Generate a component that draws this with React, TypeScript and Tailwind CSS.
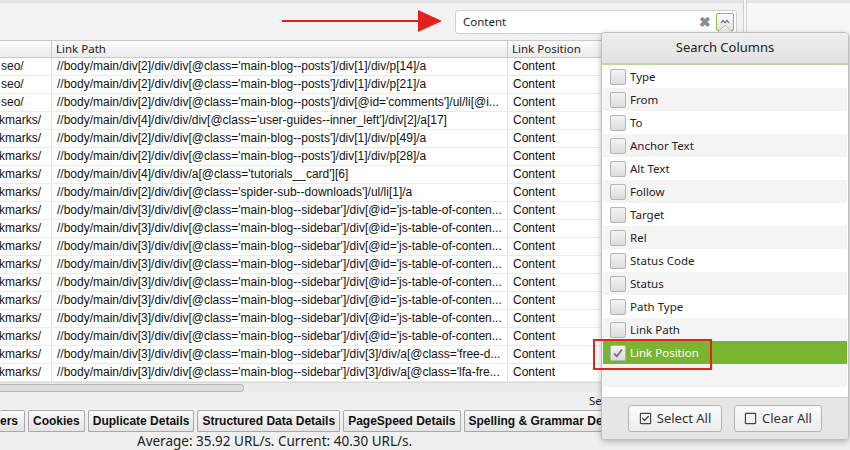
import React from "react";
import { FaRegCheckSquare, FaRegSquare } from "react-icons/fa";

const rows: [string, string][] = [
  ["seo/", "//body/main/div[2]/div/div[@class='main-blog--posts']/div[1]/div/p[14]/a"],
  ["seo/", "//body/main/div[2]/div/div[@class='main-blog--posts']/div[1]/div/p[21]/a"],
  ["seo/", "//body/main/div[2]/div/div[@class='main-blog--posts']/div[@id='comments']/ul/li[@i..."],
  ["kmarks/", "//body/main/div[4]/div/div/div[@class='user-guides--inner_left']/div[2]/a[17]"],
  ["kmarks/", "//body/main/div[2]/div/div[@class='main-blog--posts']/div[1]/div/p[49]/a"],
  ["kmarks/", "//body/main/div[2]/div/div[@class='main-blog--posts']/div[1]/div/p[28]/a"],
  ["kmarks/", "//body/main/div[4]/div/div/a[@class='tutorials__card'][6]"],
  ["kmarks/", "//body/main/div[2]/div/div[@class='spider-sub--downloads']/ul/li[1]/a"],
  ["kmarks/", "//body/main/div[3]/div/div[@class='main-blog--sidebar']/div[@id='js-table-of-conten..."],
  ["kmarks/", "//body/main/div[3]/div/div[@class='main-blog--sidebar']/div[@id='js-table-of-conten..."],
  ["kmarks/", "//body/main/div[3]/div/div[@class='main-blog--sidebar']/div[@id='js-table-of-conten..."],
  ["kmarks/", "//body/main/div[3]/div/div[@class='main-blog--sidebar']/div[@id='js-table-of-conten..."],
  ["kmarks/", "//body/main/div[3]/div/div[@class='main-blog--sidebar']/div[@id='js-table-of-conten..."],
  ["kmarks/", "//body/main/div[3]/div/div[@class='main-blog--sidebar']/div[@id='js-table-of-conten..."],
  ["kmarks/", "//body/main/div[3]/div/div[@class='main-blog--sidebar']/div[@id='js-table-of-conten..."],
  ["kmarks/", "//body/main/div[3]/div/div[@class='main-blog--sidebar']/div[@id='js-table-of-conten..."],
  ["kmarks/", "//body/main/div[3]/div/div[@class='main-blog--sidebar']/div[3]/div/a[@class='free-d..."],
  ["kmarks/", "//body/main/div[3]/div/div[@class='main-blog--sidebar']/div[3]/div/a[@class='lfa-fre..."],
];

const columns = [
  "Type",
  "From",
  "To",
  "Anchor Text",
  "Alt Text",
  "Follow",
  "Target",
  "Rel",
  "Status Code",
  "Status",
  "Path Type",
  "Link Path",
  "Link Position",
];

const tabs = [
  { label: "ers", cls: "pl-0 pr-[6px] border-l-0" },
  { label: "Cookies", cls: "px-[4px]" },
  { label: "Duplicate Details", cls: "px-[4px]" },
  { label: "Structured Data Details", cls: "px-[4px]" },
  { label: "PageSpeed Details", cls: "px-[4px]" },
  { label: "Spelling & Grammar Details", cls: "px-[4px]" },
];

function Checkbox({ checked }: { checked?: boolean }) {
  return (
    <div className="w-[16px] h-[16px] shrink-0 rounded-[2px] border border-[#b4b4b4] bg-gradient-to-b from-[#f4f4f4] to-[#dcdcdc] flex items-center justify-center">
      {checked && (
        <svg width="12" height="12" viewBox="0 0 12 12">
          <path d="M2 6.5 L4.8 9.3 L10 2.5" fill="none" stroke="#7a7a7a" strokeWidth="2" />
        </svg>
      )}
    </div>
  );
}

export default function App() {
  return (
    <div className="relative w-[850px] h-[450px] overflow-hidden bg-[#f0f0f0] flex flex-col font-['Liberation_Sans',Arial,sans-serif] text-[12px] text-[#111]">
      <div className="flex h-[432px]">
        {/* left main */}
        <div className="w-[743px] flex flex-col">
          {/* toolbar */}
          <div className="h-[40px] border-t-[3px] border-[#e4e4e4] bg-[#f2f2f2] flex items-center justify-end pr-[6px]">
            <div className="w-[282px] h-[24px] mt-[1px] bg-white border border-[#cfcfcf] rounded-[3px] flex items-center pl-[7px] pr-[2px]">
              <span className="flex-1 font-['Noto_Sans',sans-serif] text-[11.5px] text-[#222]">Content</span>
              <span className="text-[#8c8c8c] text-[14px] font-bold leading-none mr-[5px]">✖</span>
              <div className="w-[18px] h-[18px] rounded-[2px] border border-[#8cc152] bg-gradient-to-b from-[#fafafa] to-[#e2e2e2] flex items-center justify-center">
                <svg width="10" height="8" viewBox="0 0 10 8">
                  <path d="M1 5 L3 2.5 L5 5" fill="none" stroke="#666" strokeWidth="1.2" />
                  <path d="M5 5 L7 2.5 L9 5" fill="none" stroke="#666" strokeWidth="1.2" />
                </svg>
              </div>
            </div>
          </div>
          {/* table header */}
          <div className="h-[18px] flex border-y border-[#c9c9c9] bg-gradient-to-b from-[#fbfbfb] to-[#ebebeb] font-['Noto_Sans',sans-serif] text-[11.5px] text-[#222]">
            <div className="w-[52px] border-r border-[#c9c9c9]" />
            <div className="w-[456px] border-r border-[#c9c9c9] pl-[4px] leading-[16px]">Link Path</div>
            <div className="flex-1 pl-[4px] leading-[16px]">Link Position</div>
          </div>
          {/* rows */}
          <div className="flex flex-col bg-white">
            {rows.map((r, i) => (
              <div key={i} className="h-[18px] flex border-b border-[#ececec] leading-[17px] whitespace-nowrap">
                <div className={`w-[52px] border-r border-[#e2e2e2] overflow-hidden ${r[0] === "kmarks/" ? "pl-0" : "pl-[1px]"}`}>
                  <span className={r[0] === "kmarks/" ? "ml-[-1px]" : ""}>{r[0]}</span>
                </div>
                <div className="w-[456px] border-r border-[#e2e2e2] pl-[5px] overflow-hidden">{r[1]}</div>
                <div className="flex-1 pl-[5px]">Content</div>
              </div>
            ))}
          </div>
          {/* scrollbar */}
          <div className="h-[10px] bg-[#ececec] border-t border-[#d8d8d8] flex items-center">
            <div className="w-[244px] h-[8px] rounded-r-[4px] bg-[#dedede] border border-[#b8b8b8] border-l-0" />
          </div>
          {/* info row */}
          <div className="h-[18px] bg-[#f0f0f0] flex items-center pl-[589px] font-['Noto_Sans',sans-serif] text-[11.5px] text-[#222] whitespace-nowrap overflow-hidden">
            Selected Cells: 0 Total: 18
          </div>
          {/* tabs */}
          <div className="h-[22px] flex items-stretch gap-[3px] whitespace-nowrap overflow-hidden">
            {tabs.map((t) => (
              <div
                key={t.label}
                className={`border border-[#a9a9a9] rounded-t-[2px] bg-gradient-to-b from-[#fafafa] to-[#e3e3e3] font-bold text-[12px] leading-[20px] text-[#111] ${t.cls}`}
              >
                {t.label}
              </div>
            ))}
          </div>
        </div>
        {/* right panel */}
        <div className="flex-1 border-l-[4px] border-double border-[#d0d0d0] bg-[#f7f7f7] flex flex-col">
          <div className="h-[3px] bg-[#e4e4e4]" />
        </div>
      </div>
      {/* status bar */}
      <div className="h-[18px] flex items-center pl-[137px] font-['Noto_Sans',sans-serif] text-[13.5px] text-[#222]">
        Average: 35.92 URL/s. Current: 40.30 URL/s.
      </div>

      {/* red arrow overlay */}
      <svg className="absolute left-[280px] top-[9px]" width="164" height="26" viewBox="0 0 164 26">
        <line x1="2" y1="12" x2="140" y2="12" stroke="#e5211c" strokeWidth="2" />
        <polygon points="138,1 162,12 138,23" fill="#e5211c" />
      </svg>

      {/* popup pointer */}
      <svg className="absolute left-[716px] top-[25px]" width="18" height="9" viewBox="0 0 18 9">
        <polygon points="0,9 9,0 18,9" fill="#ececec" stroke="#c4c4c4" strokeWidth="1" />
        <rect x="0" y="8" width="18" height="2" fill="#ececec" />
      </svg>

      {/* popup */}
      <div className="absolute left-[601px] top-[32px] w-[248px] h-[408px] rounded-[4px] border border-[#bdbdbd] bg-white shadow-[0_2px_6px_rgba(0,0,0,0.25)] flex flex-col overflow-hidden font-['Noto_Sans',sans-serif]">
        <div className="h-[32px] shrink-0 bg-gradient-to-b from-[#eeeeee] to-[#e2e2e2] border-b-[2px] border-[#bcd89a] flex items-center justify-center text-[13px] text-[#222]">
          Search Columns
        </div>
        <div className="flex-1 flex flex-col px-[1px]">
          {columns.map((c, i) => {
            const sel = c === "Link Position";
            return (
              <div
                key={c}
                className={`h-[23px] flex items-center gap-[4px] pl-[7px] text-[11.5px] ${
                  sel ? "bg-[#79b530] text-white" : i % 2 === 1 ? "bg-[#f4f4f4] text-[#222]" : "bg-white text-[#222]"
                }`}
              >
                <Checkbox checked={sel} />
                <span>{c}</span>
              </div>
            );
          })}
          <div className="h-[23px] bg-[#f4f4f4]" />
        </div>
        <div className="h-[42px] shrink-0 bg-[#e6e6e6] border-t border-[#cfcfcf] flex items-center pl-[26px] gap-[12px]">
          <div className="w-[94px] h-[27px] rounded-[3px] border border-[#b5b5b5] bg-gradient-to-b from-[#fbfbfb] to-[#ececec] flex items-center justify-center gap-[5px] text-[13px] text-[#333]">
            <FaRegCheckSquare className="w-[13px] h-[13px] text-[#444]" />
            <span>Select All</span>
          </div>
          <div className="w-[88px] h-[27px] rounded-[3px] border border-[#b5b5b5] bg-gradient-to-b from-[#fbfbfb] to-[#ececec] flex items-center justify-center gap-[5px] text-[13px] text-[#333]">
            <FaRegSquare className="w-[13px] h-[13px] text-[#444]" />
            <span>Clear All</span>
          </div>
        </div>
      </div>

      {/* red highlight rectangle */}
      <div className="absolute left-[593px] top-[339px] w-[119px] h-[31px] border-[2px] border-[#e2231a]" />
    </div>
  );
}
